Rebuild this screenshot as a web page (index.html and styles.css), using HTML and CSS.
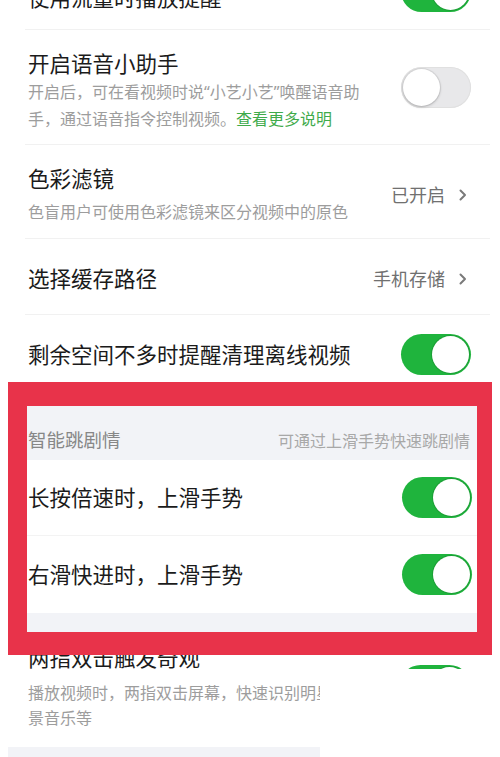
FILE: index.html
```html
<!DOCTYPE html>
<html lang="zh-CN">
<head>
<meta charset="utf-8">
<title>设置</title>
<link rel="stylesheet" href="styles.css">
</head>
<body>
<div class="list">
  <div class="row row-top">
    <div class="text"><div class="title">使用流量时播放提醒</div></div>
    <span class="switch on"><span class="knob"></span></span>
  </div>
  <div class="sep"></div>
  <div class="row row-voice">
    <div class="text">
      <div class="title">开启语音小助手</div>
      <div class="desc">开启后，可在看视频时说“小艺小艺”唤醒语音助手，通过语音指令控制视频。<span class="link">查看更多说明</span></div>
    </div>
    <span class="switch"><span class="knob"></span></span>
  </div>
  <div class="sep"></div>
  <div class="row row-filter">
    <div class="text">
      <div class="title">色彩滤镜</div>
      <div class="desc desc-gap">色盲用户可使用色彩滤镜来区分视频中的原色</div>
    </div>
    <span class="value">已开启<svg class="chev" width="8" height="12" viewBox="0 0 8 12"><polyline points="1.5,1.5 6,6 1.5,10.5" fill="none" stroke="#7a7a7a" stroke-width="2" stroke-linecap="round" stroke-linejoin="round"/></svg></span>
  </div>
  <div class="sep"></div>
  <div class="row row-path">
    <div class="text"><div class="title">选择缓存路径</div></div>
    <span class="value">手机存储<svg class="chev" width="8" height="12" viewBox="0 0 8 12"><polyline points="1.5,1.5 6,6 1.5,10.5" fill="none" stroke="#7a7a7a" stroke-width="2" stroke-linecap="round" stroke-linejoin="round"/></svg></span>
  </div>
  <div class="sep"></div>
  <div class="row row-space">
    <div class="text"><div class="title">剩余空间不多时提醒清理离线视频</div></div>
    <span class="switch on"><span class="knob"></span></span>
  </div>
</div>

<div class="highlight">
  <div class="group-head">
    <span class="group-title">智能跳剧情</span>
    <span class="group-note">可通过上滑手势快速跳剧情</span>
  </div>
  <div class="group-row">
    <span class="title">长按倍速时，上滑手势</span>
    <span class="switch on"><span class="knob"></span></span>
  </div>
  <div class="group-sep"></div>
  <div class="group-row group-row-b">
    <span class="title">右滑快进时，上滑手势</span>
    <span class="switch on"><span class="knob"></span></span>
  </div>
  <div class="group-foot"></div>
</div>

<div class="cut-wide">
  <div class="row row-under">
    <div class="text"><div class="title">两指双击触发奇观</div></div>
    <span class="switch on"><span class="knob"></span></span>
  </div>
</div>
<div class="cut-narrow">
  <div class="desc desc-under">播放视频时，两指双击屏幕，快速识别明星、背景音乐等</div>
  <div class="strip"></div>
</div>
</body>
</html>
```

FILE: styles.css
```css
* {
  box-sizing: border-box;
  margin: 0;
  padding: 0;
}

html, body {
  background: #ffffff;
}

body {
  width: 500px;
  height: 757px;
  overflow: hidden;
  font-family: "Noto Sans", "Noto Sans CJK SC", sans-serif;
  color: #1b1b1b;
}

.list {
  margin-top: -30px;
}

.row {
  display: flex;
  align-items: center;
  padding: 0 29px 0 28px;
}

.text {
  flex: 1;
  min-width: 0;
}

.title {
  font-size: 21.5px;
  line-height: 30px;
  white-space: nowrap;
}

.desc {
  width: 340px;
  font-size: 16px;
  line-height: 27px;
  color: #9d9d9d;
}

.desc-gap {
  margin-top: 5px;
}

.link {
  color: #3fab4b;
}

.sep {
  height: 1px;
  margin: 0 10px 0 25px;
  background: #f1f1f1;
}

/* rows */
.row-top {
  height: 59px;
  align-items: flex-start;
  padding-top: 1px;
}

.row-top .title {
  margin-top: 12px;
}

.row-voice {
  align-items: flex-start;
  padding-top: 19px;
  padding-bottom: 11px;
}

.row-voice .switch {
  margin-top: 18px;
}

.row-filter {
  padding-top: 19px;
  padding-bottom: 12px;
}

.row-path {
  padding-top: 25px;
  padding-bottom: 20px;
}

.row-space {
  padding-top: 19px;
  padding-bottom: 7px;
}

/* value + chevron */
.value {
  display: flex;
  align-items: center;
  gap: 14px;
  margin-right: 4px;
  font-size: 18px;
  line-height: 26px;
  color: #707070;
}

.chev {
  display: block;
}

/* switches */
.switch {
  flex: none;
  display: flex;
  align-items: center;
  width: 70px;
  height: 41px;
  padding: 2px;
  border-radius: 21px;
  background: #e8e8ea;
  box-shadow: inset 0 0 0 1px #e0e0e0;
}

.knob {
  width: 37px;
  height: 37px;
  border-radius: 50%;
  background: #ffffff;
  box-shadow: 0 1px 3px rgba(0, 0, 0, 0.22), 0 0 0 1px rgba(0, 0, 0, 0.06);
}

.switch.on {
  justify-content: flex-end;
  background: #1fb43d;
  box-shadow: none;
}

.switch.on .knob {
  box-shadow: 0 0 0 1px rgba(20, 120, 40, 0.35);
}

/* red highlight annotation */
.highlight {
  position: relative;
  z-index: 2;
  width: 484px;
  margin-left: 8px;
  border-style: solid;
  border-color: #e8334a;
  border-width: 24px 15px 23px 19px;
  background: #ffffff;
}

.group-head {
  display: flex;
  justify-content: space-between;
  align-items: baseline;
  height: 54px;
  padding: 20px 7px 0 1px;
  background: #f2f3f7;
}

.group-title {
  font-size: 18.5px;
  line-height: 28px;
  color: #878787;
}

.group-note {
  font-size: 16px;
  color: #a8a8a8;
}

.group-row {
  display: flex;
  justify-content: space-between;
  align-items: center;
  height: 75px;
  padding: 0 5px 0 1px;
  background: #ffffff;
}

.group-row-b {
  height: 77px;
}

.group-sep {
  height: 1px;
  background: #f3f3f3;
}

.group-foot {
  height: 19px;
  background: #f2f3f7;
}

/* cropped rest of the page below the annotation */
.cut-wide {
  height: 14px;
  overflow: hidden;
}

.row-under {
  align-items: flex-start;
  margin-top: -12px;
}

.row-under .switch {
  margin-top: 22px;
  margin-right: 1px;
}

.cut-narrow {
  width: 312px;
  margin-left: 8px;
  overflow: hidden;
}

.desc-under {
  margin-left: 20px;
  padding-top: 11.5px;
  line-height: 25px;
}

.strip {
  height: 20px;
  margin-top: 16.5px;
  background: #f2f3f7;
}
```
